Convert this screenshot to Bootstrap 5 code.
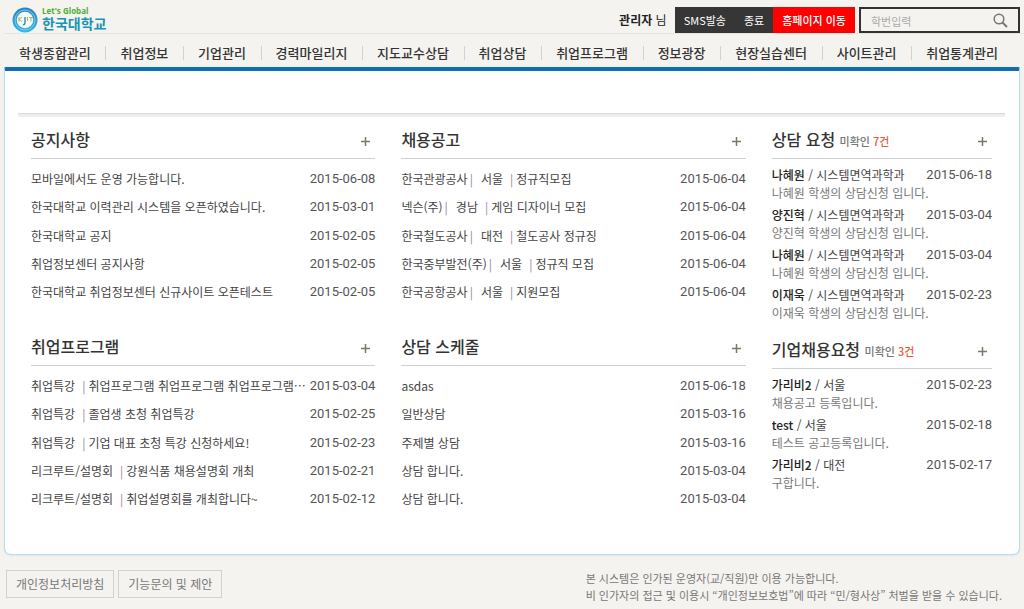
<!DOCTYPE html>
<html lang="ko">
<head>
<meta charset="utf-8">
<meta name="viewport" content="width=device-width, initial-scale=1">
<title>한국대학교 취업정보센터 관리자</title>
<link href="https://cdn.jsdelivr.net/npm/bootstrap@5.3.0/dist/css/bootstrap.min.css" rel="stylesheet">
<style>
body{background:#f5f3ef;color:#444;font:12px/18px "Noto Sans CJK KR",sans-serif}
a{color:inherit;text-decoration:none}
.topbar{height:34px;margin-left:4px;padding:7px 4px 0 8px;border-bottom:1px solid #e6e4e0}
.brand-en{font:bold 8px/8px "Open Sans",sans-serif;color:#4fae35}
.brand-ko{font-size:14px;line-height:17px;color:#1895b4}
.who{color:#222;line-height:26px}
.tool-btn{height:26px;padding:0 9px;border:0;background:#363636;color:#fff;font-size:11px;line-height:26px}
.tool-btn.go-home{background:#f00;font-weight:500}
.find-box{width:161px;height:26px;border:2px solid #333;padding:0 10px;margin-left:4px}
.find-box input{width:100%;min-width:0;border:0;outline:0;background:none;font-size:11px;padding:2px 0 0;color:#444}
.find-box input::placeholder{color:#aaa;opacity:1}
.find-box button{border:0;background:none;padding:0;line-height:0}
.menu{height:33px;padding:4px 26px 0 19px;font-size:13px;color:#333}
.menu li+li{border-left:1px solid #d3d1cd;padding-left:14px}
.menu li{line-height:14px;font-weight:500}
.panel{margin:0 4px;min-height:488px;background:#fff;border:1px solid #bcdcec;border-top:4px solid #0f6db5;border-radius:2px 2px 7px 7px;box-shadow:0 1px 2px #d5e6f0;padding:42px 14px 0 13px}
.rule{height:4px;background:#eee;border-top:1px solid #d8dada}
.board{display:grid;grid-template-columns:minmax(0,344fr) minmax(0,344fr) minmax(0,220fr);gap:26px;padding:8px 13px 0}
.head{height:34px;border-bottom:1px solid #ccd1d1;padding-right:4px}
.head h2{font-size:16px;line-height:28px;font-weight:500;color:#333;margin:0}
.head small{font-size:11px;line-height:11px;color:#777}
.head em{font-style:normal;color:#ea5a38}
.rows{height:149px;padding:6px 0 2px}
.date{font:13px/18px Roboto,sans-serif;color:#555;white-space:nowrap}
.bar-a{margin:0 8px 0 2px;color:#97849a}
.bar-b{margin:0 3px 0 7px;color:#97849a}
.asks{padding-top:7px;margin-bottom:1px}
.asks li{padding-bottom:4px}
.asks p{color:#777;margin:0}
.asks b{font-weight:500;color:#222}
.foot{padding:15px 22px 0 6px;color:#777}
.foot-btn{height:28px;border:1px solid #d3d1cd;background:none;color:#777;padding:0 9px;font-size:12px}
.legal{font-size:11px;line-height:17px}
</style>
</head>
<body>
<header>
  <div class="topbar d-flex justify-content-between">
    <a href="#" class="d-flex gap-1" aria-label="한국대학교">
      <svg width="26" height="26" viewBox="0 0 26 26" aria-hidden="true">
        <defs><linearGradient id="ring" x1="0" y1="0" x2="0" y2="1"><stop offset="0" stop-color="#2a82c4"/><stop offset="1" stop-color="#35b9e8"/></linearGradient></defs>
        <circle cx="13" cy="13" r="12.5" fill="url(#ring)"/>
        <circle cx="13" cy="13" r="10" fill="none" stroke="#7cc8ec" stroke-width="1"/>
        <circle cx="13" cy="13" r="8.3" fill="#f4faf8"/>
        <g fill="none" stroke-width="1"><path d="M7 10v4.500M10 10l-3 2.300 3 2.200" stroke="#a5b760"/><path d="M13 10v5.500q0 2.500-2 2" stroke="#2582b8" stroke-width="1.300"/><path d="M15.500 10v4M17 10.500h4M19 10.500v4" stroke="#a5b760"/></g>
      </svg>
      <span><span class="brand-en d-block">Let's Global</span><span class="brand-ko d-block fw-bold">한국대학교</span></span>
    </a>
    <div class="d-flex">
      <span class="who me-2"><b class="fw-bold">관리자</b> 님</span>
      <button type="button" class="tool-btn">SMS발송</button><button type="button" class="tool-btn">종료</button><button type="button" class="tool-btn go-home">홈페이지 이동</button>
      <form class="find-box d-flex align-items-center">
        <input type="text" placeholder="학번입력" aria-label="학번입력">
        <button type="button" aria-label="검색"><svg width="15" height="15" viewBox="0 0 15 15" fill="none" stroke="#777"><circle cx="6" cy="6" r="4.800" stroke-width="1.500"/><path d="M9.500 9.500l4.500 4.500" stroke-width="2"/></svg></button>
      </form>
    </div>
  </div>
  <nav aria-label="주 메뉴">
    <ul class="menu list-unstyled d-flex justify-content-between align-items-center mb-0 text-nowrap">
      <li><a href="#">학생종합관리</a></li><li><a href="#">취업정보</a></li><li><a href="#">기업관리</a></li><li><a href="#">경력마일리지</a></li><li><a href="#">지도교수상담</a></li><li><a href="#">취업상담</a></li><li><a href="#">취업프로그램</a></li><li><a href="#">정보광장</a></li><li><a href="#">현장실습센터</a></li><li><a href="#">사이트관리</a></li><li><a href="#">취업통계관리</a></li>
    </ul>
  </nav>
</header>
<main class="panel">
  <div class="rule"></div>
  <div class="board">
    <div class="d-flex flex-column gap-4">
      <section>
        <div class="head d-flex justify-content-between align-items-center"><h2 class="align-self-start">공지사항</h2><a href="#" aria-label="공지사항 더보기"><svg class="d-block" width="11" height="11" stroke="#777a68" stroke-width="1.500"><path d="M5.500 1v9M1 5.500h9"/></svg></a></div>
        <ul class="rows list-unstyled d-flex flex-column mb-0">
          <li class="d-flex flex-fill align-items-center justify-content-between"><a href="#" class="text-truncate">모바일에서도 운영 가능합니다.</a><span class="date">2015-06-08</span></li>
          <li class="d-flex flex-fill align-items-center justify-content-between"><a href="#" class="text-truncate">한국대학교 이력관리 시스템을 오픈하였습니다.</a><span class="date">2015-03-01</span></li>
          <li class="d-flex flex-fill align-items-center justify-content-between"><a href="#" class="text-truncate">한국대학교 공지</a><span class="date">2015-02-05</span></li>
          <li class="d-flex flex-fill align-items-center justify-content-between"><a href="#" class="text-truncate">취업정보센터 공지사항</a><span class="date">2015-02-05</span></li>
          <li class="d-flex flex-fill align-items-center justify-content-between"><a href="#" class="text-truncate">한국대학교 취업정보센터 신규사이트 오픈테스트</a><span class="date">2015-02-05</span></li>
        </ul>
      </section>
      <section>
        <div class="head d-flex justify-content-between align-items-center"><h2 class="align-self-start">취업프로그램</h2><a href="#" aria-label="취업프로그램 더보기"><svg class="d-block" width="11" height="11" stroke="#777a68" stroke-width="1.500"><path d="M5.500 1v9M1 5.500h9"/></svg></a></div>
        <ul class="rows list-unstyled d-flex flex-column mb-0">
          <li class="d-flex flex-fill align-items-center justify-content-between"><a href="#" class="text-nowrap">취업특강<span class="bar-b">|</span>취업프로그램 취업프로그램 취업프로그램…</a><span class="date">2015-03-04</span></li>
          <li class="d-flex flex-fill align-items-center justify-content-between"><a href="#" class="text-truncate">취업특강<span class="bar-b">|</span>졸업생 초청 취업특강</a><span class="date">2015-02-25</span></li>
          <li class="d-flex flex-fill align-items-center justify-content-between"><a href="#" class="text-truncate">취업특강<span class="bar-b">|</span>기업 대표 초청 특강 신청하세요!</a><span class="date">2015-02-23</span></li>
          <li class="d-flex flex-fill align-items-center justify-content-between"><a href="#" class="text-truncate">리크루트/설명회<span class="bar-b">|</span>강원식품 채용설명회 개최</a><span class="date">2015-02-21</span></li>
          <li class="d-flex flex-fill align-items-center justify-content-between"><a href="#" class="text-truncate">리크루트/설명회<span class="bar-b">|</span>취업설명회를 개최합니다~</a><span class="date">2015-02-12</span></li>
        </ul>
      </section>
    </div>
    <div class="d-flex flex-column gap-4">
      <section>
        <div class="head d-flex justify-content-between align-items-center"><h2 class="align-self-start">채용공고</h2><a href="#" aria-label="채용공고 더보기"><svg class="d-block" width="11" height="11" stroke="#777a68" stroke-width="1.500"><path d="M5.500 1v9M1 5.500h9"/></svg></a></div>
        <ul class="rows list-unstyled d-flex flex-column mb-0">
          <li class="d-flex flex-fill align-items-center justify-content-between"><a href="#" class="text-truncate">한국관광공사<span class="bar-a">|</span>서울<span class="bar-b">|</span>정규직모집</a><span class="date">2015-06-04</span></li>
          <li class="d-flex flex-fill align-items-center justify-content-between"><a href="#" class="text-truncate">넥슨(주)<span class="bar-a">|</span>경남<span class="bar-b">|</span>게임 디자이너 모집</a><span class="date">2015-06-04</span></li>
          <li class="d-flex flex-fill align-items-center justify-content-between"><a href="#" class="text-truncate">한국철도공사<span class="bar-a">|</span>대전<span class="bar-b">|</span>철도공사 정규징</a><span class="date">2015-06-04</span></li>
          <li class="d-flex flex-fill align-items-center justify-content-between"><a href="#" class="text-truncate">한국중부발전(주)<span class="bar-a">|</span>서울<span class="bar-b">|</span>정규직 모집</a><span class="date">2015-06-04</span></li>
          <li class="d-flex flex-fill align-items-center justify-content-between"><a href="#" class="text-truncate">한국공항공사<span class="bar-a">|</span>서울<span class="bar-b">|</span>지원모집</a><span class="date">2015-06-04</span></li>
        </ul>
      </section>
      <section>
        <div class="head d-flex justify-content-between align-items-center"><h2 class="align-self-start">상담 스케줄</h2><a href="#" aria-label="상담 스케줄 더보기"><svg class="d-block" width="11" height="11" stroke="#777a68" stroke-width="1.500"><path d="M5.500 1v9M1 5.500h9"/></svg></a></div>
        <ul class="rows list-unstyled d-flex flex-column mb-0">
          <li class="d-flex flex-fill align-items-center justify-content-between"><a href="#" class="text-truncate">asdas</a><span class="date">2015-06-18</span></li>
          <li class="d-flex flex-fill align-items-center justify-content-between"><a href="#" class="text-truncate">일반상담</a><span class="date">2015-03-16</span></li>
          <li class="d-flex flex-fill align-items-center justify-content-between"><a href="#" class="text-truncate">주제별 상담</a><span class="date">2015-03-16</span></li>
          <li class="d-flex flex-fill align-items-center justify-content-between"><a href="#" class="text-truncate">상담 합니다.</a><span class="date">2015-03-04</span></li>
          <li class="d-flex flex-fill align-items-center justify-content-between"><a href="#" class="text-truncate">상담 합니다.</a><span class="date">2015-03-04</span></li>
        </ul>
      </section>
    </div>
    <div class="d-flex flex-column gap-2">
      <section>
        <div class="head d-flex justify-content-between align-items-center"><h2 class="align-self-start">상담 요청 <small>미확인 <em>7건</em></small></h2><a href="#" aria-label="상담 요청 더보기"><svg class="d-block" width="11" height="11" stroke="#777a68" stroke-width="1.500"><path d="M5.500 1v9M1 5.500h9"/></svg></a></div>
        <ul class="asks list-unstyled">
          <li><div class="d-flex justify-content-between"><a href="#" class="text-truncate"><b>나혜원</b> / 시스템면역과학과</a><span class="date">2015-06-18</span></div><p>나혜원 학생의 상담신청 입니다.</p></li>
          <li><div class="d-flex justify-content-between"><a href="#" class="text-truncate"><b>양진혁</b> / 시스템면역과학과</a><span class="date">2015-03-04</span></div><p>양진혁 학생의 상담신청 입니다.</p></li>
          <li><div class="d-flex justify-content-between"><a href="#" class="text-truncate"><b>나혜원</b> / 시스템면역과학과</a><span class="date">2015-03-04</span></div><p>나혜원 학생의 상담신청 입니다.</p></li>
          <li><div class="d-flex justify-content-between"><a href="#" class="text-truncate"><b>이재욱</b> / 시스템면역과학과</a><span class="date">2015-02-23</span></div><p>이재욱 학생의 상담신청 입니다.</p></li>
        </ul>
      </section>
      <section>
        <div class="head d-flex justify-content-between align-items-center"><h2 class="align-self-start">기업채용요청 <small>미확인 <em>3건</em></small></h2><a href="#" aria-label="기업채용요청 더보기"><svg class="d-block" width="11" height="11" stroke="#777a68" stroke-width="1.500"><path d="M5.500 1v9M1 5.500h9"/></svg></a></div>
        <ul class="asks list-unstyled">
          <li><div class="d-flex justify-content-between"><a href="#" class="text-truncate"><b>가리비2</b> / 서울</a><span class="date">2015-02-23</span></div><p>채용공고 등록입니다.</p></li>
          <li><div class="d-flex justify-content-between"><a href="#" class="text-truncate"><b>test</b> / 서울</a><span class="date">2015-02-18</span></div><p>테스트 공고등록입니다.</p></li>
          <li><div class="d-flex justify-content-between"><a href="#" class="text-truncate"><b>가리비2</b> / 대전</a><span class="date">2015-02-17</span></div><p>구합니다.</p></li>
        </ul>
      </section>
    </div>
  </div>
</main>
<footer class="foot d-flex justify-content-between">
  <div class="d-flex align-items-start gap-1"><button type="button" class="foot-btn">개인정보처리방침</button><button type="button" class="foot-btn">기능문의 및 제안</button></div>
  <div class="legal">본 시스템은 인가된 운영자(교/직원)만 이용 가능합니다.<br>비 인가자의 접근 및 이용시 “개인정보보호법”에 따라 “민/형사상” 처벌을 받을 수 있습니다.</div>
</footer>
<script src="https://cdn.jsdelivr.net/npm/bootstrap@5.3.0/dist/js/bootstrap.bundle.min.js"></script>
</body>
</html>
